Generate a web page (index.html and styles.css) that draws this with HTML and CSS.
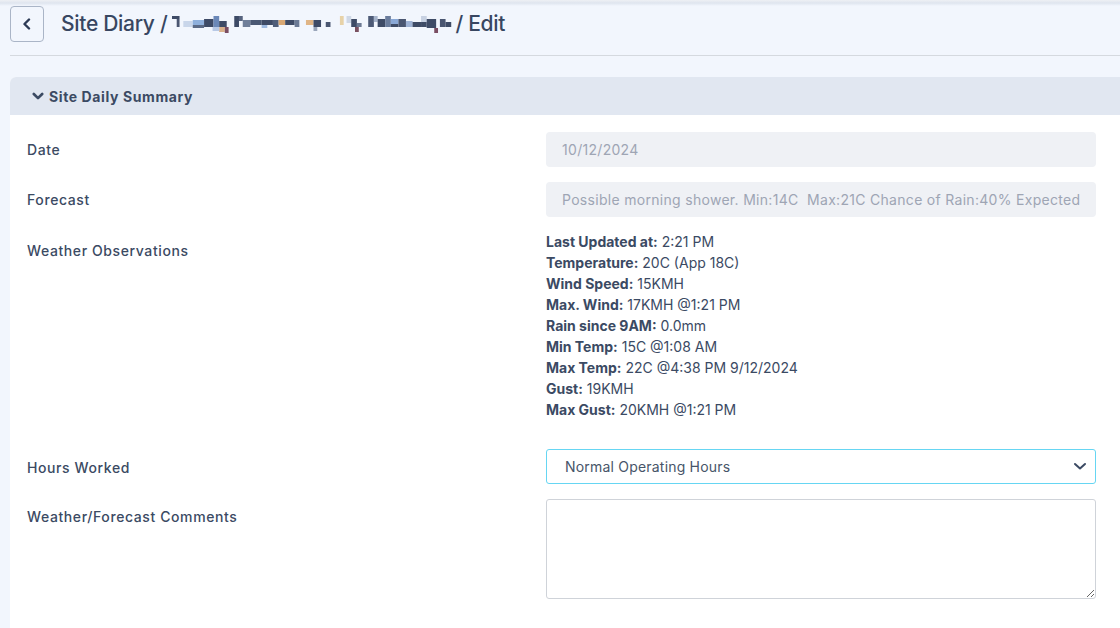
FILE: index.html
```html
<!DOCTYPE html>
<html>
<head>
<meta charset="utf-8">
<link rel="stylesheet" href="styles.css">
</head>
<body>
<div class="shade"></div>
<header class="topbar">
  <button class="back" type="button" aria-label="Back">
    <svg width="10" height="12" viewBox="0 0 10 12"><path d="M7 1.5 L2.5 6 L7 10.5" fill="none" stroke="#2c3a55" stroke-width="2.4" stroke-linecap="round" stroke-linejoin="round"/></svg>
  </button>
  <h1 class="title">
    <span>Site Diary /</span>
    <svg class="mosaic" width="283" height="22" viewBox="0 0 300 22" preserveAspectRatio="none">
      <rect x="0" y="3" width="8" height="3" fill="#3e4b66"/>
      <rect x="5" y="6" width="3" height="8" fill="#4a5671"/>
      <rect x="12" y="8" width="10" height="6" fill="#c9d6ea"/>
      <rect x="22" y="7" width="12" height="5" fill="#8fb0dc"/>
      <rect x="22" y="12" width="12" height="3" fill="#5b6a86"/>
      <rect x="34" y="6" width="10" height="8" fill="#3d4a66"/>
      <rect x="44" y="3" width="6" height="11" fill="#6b88b8"/>
      <rect x="50" y="8" width="8" height="6" fill="#3e4b66"/>
      <rect x="50" y="14" width="6" height="5" fill="#d9b08a"/>
      <rect x="56" y="14" width="4" height="6" fill="#7a4d62"/>
      <rect x="43" y="14" width="7" height="4" fill="#b8c9e6"/>
      <rect x="66" y="3" width="5" height="11" fill="#3d4a66"/>
      <rect x="71" y="3" width="4" height="5" fill="#56637e"/>
      <rect x="75" y="7" width="8" height="7" fill="#6f7e99"/>
      <rect x="83" y="7" width="12" height="5" fill="#4a5873"/>
      <rect x="95" y="7" width="12" height="5" fill="#3e4b66"/>
      <rect x="95" y="12" width="6" height="3" fill="#9fbbe2"/>
      <rect x="107" y="7" width="6" height="7" fill="#4f5e7a"/>
      <rect x="113" y="7" width="7" height="5" fill="#d9a874"/>
      <rect x="120" y="7" width="10" height="5" fill="#3e4b66"/>
      <rect x="130" y="7" width="5" height="7" fill="#6b7a95"/>
      <rect x="142" y="7" width="8" height="5" fill="#e0b586"/>
      <rect x="150" y="7" width="8" height="7" fill="#3e4b66"/>
      <rect x="150" y="14" width="4" height="4" fill="#9aa6bb"/>
      <rect x="163" y="9" width="5" height="5" fill="#4a5671"/>
      <rect x="178" y="3" width="4" height="9" fill="#e7d2a8"/>
      <rect x="185" y="3" width="5" height="7" fill="#cfd8e6"/>
      <rect x="190" y="6" width="6" height="8" fill="#3e4b66"/>
      <rect x="196" y="10" width="5" height="4" fill="#6d7a94"/>
      <rect x="194" y="14" width="4" height="5" fill="#7a5060"/>
      <rect x="208" y="3" width="6" height="11" fill="#4d5a76"/>
      <rect x="214" y="3" width="4" height="6" fill="#a7b4cb"/>
      <rect x="218" y="6" width="8" height="8" fill="#3e4b66"/>
      <rect x="226" y="3" width="6" height="11" fill="#6a7c9c"/>
      <rect x="232" y="6" width="8" height="5" fill="#8aa8d6"/>
      <rect x="232" y="11" width="8" height="3" fill="#3e4b66"/>
      <rect x="240" y="6" width="8" height="8" fill="#4a5671"/>
      <rect x="248" y="8" width="7" height="6" fill="#9fb3d5"/>
      <rect x="255" y="9" width="9" height="5" fill="#3e4b66"/>
      <rect x="264" y="3" width="6" height="6" fill="#c7d1e2"/>
      <rect x="264" y="9" width="6" height="5" fill="#3e4b66"/>
      <rect x="270" y="6" width="10" height="9" fill="#3e4b66"/>
      <rect x="278" y="15" width="4" height="5" fill="#7a4d62"/>
      <rect x="284" y="6" width="6" height="8" fill="#4a5671"/>
      <rect x="290" y="9" width="6" height="5" fill="#3e4b66"/>
    </svg>
    <span>/ Edit</span>
  </h1>
</header>

<section class="card">
  <div class="card-head">
    <svg width="12" height="9" viewBox="0 0 12 9"><path d="M1.8 2 L6 6.2 L10.2 2" fill="none" stroke="#3b4a63" stroke-width="2.6" stroke-linecap="round" stroke-linejoin="round"/></svg>
    <span>Site Daily Summary</span>
  </div>
  <div class="card-body">
    <div class="row">
      <label class="label">Date</label>
      <div class="field ro">10/12/2024</div>
    </div>
    <div class="row">
      <label class="label">Forecast</label>
      <div class="field ro">Possible morning shower. Min:14C&nbsp; Max:21C Chance of Rain:40% Expected</div>
    </div>
    <div class="row obs-row">
      <label class="label">Weather Observations</label>
      <ul class="obs">
        <li><b>Last Updated at:</b> 2:21 PM</li>
        <li><b>Temperature:</b> 20C (App 18C)</li>
        <li><b>Wind Speed:</b> 15KMH</li>
        <li><b>Max. Wind:</b> 17KMH @1:21 PM</li>
        <li><b>Rain since 9AM:</b> 0.0mm</li>
        <li><b>Min Temp:</b> 15C @1:08 AM</li>
        <li><b>Max Temp:</b> 22C @4:38 PM 9/12/2024</li>
        <li><b>Gust:</b> 19KMH</li>
        <li><b>Max Gust:</b> 20KMH @1:21 PM</li>
      </ul>
    </div>
    <div class="row hours-row">
      <label class="label">Hours Worked</label>
      <div class="field select">
        <span>Normal Operating Hours</span>
        <svg width="14" height="9" viewBox="0 0 14 9"><path d="M2 2 L7 6.5 L12 2" fill="none" stroke="#3b4a63" stroke-width="2" stroke-linecap="round" stroke-linejoin="round"/></svg>
      </div>
    </div>
    <div class="row comments-row">
      <label class="label">Weather/Forecast Comments</label>
      <textarea class="field area"></textarea>
    </div>
  </div>
</section>
</body>
</html>
```

FILE: styles.css
```css
* { box-sizing: border-box; }
html, body { margin: 0; padding: 0; }
body {
  background: #f2f6fd;
  font-family: Inter, "Open Sans", "Liberation Sans", sans-serif;
  color: #3b4a63;
  width: 1120px;
  height: 628px;
  overflow: hidden;
}
.shade {
  height: 6px;
  background: linear-gradient(#eef0f4 0, #dfe5ef 50%, #f2f6fd 100%);
}
.topbar {
  display: flex;
  align-items: center;
  height: 50px;
  margin-left: 10px;
  border-bottom: 1px solid #d5d9df;
  padding-bottom: 14px;
}
.back {
  width: 34px;
  height: 36px;
  border: 1px solid #aab5c7;
  border-radius: 4px;
  background: #f2f6fd;
  display: flex;
  align-items: center;
  justify-content: center;
  padding: 0;
  margin-top: 1px;
}
.title {
  margin: 0 0 0 17px;
  font-size: 21px;
  font-weight: 500;
  color: #384661;
  display: flex;
  align-items: center;
  letter-spacing: -0.3px;
}
.mosaic { margin: 0 0 0 5px; display: block; }
.card {
  margin: 21px 0 0 10px;
  background: #fff;
  border-radius: 6px 0 0 0;
  overflow: hidden;
}
.card-head {
  height: 38px;
  background: #e1e7f1;
  display: flex;
  align-items: center;
  padding-left: 22px;
  gap: 5px;
  font-size: 14px;
  font-weight: 700;
  color: #3b4a63;
  letter-spacing: 0.6px;
}
.card-body {
  padding: 17px 24px 40px 17px;
  display: flex;
  flex-direction: column;
  gap: 15px;
}
.row {
  display: grid;
  grid-template-columns: 519px 550px;
  align-items: start;
}
.label {
  font-size: 14px;
  font-weight: 500;
  color: #3b4a63;
  padding-top: 9px;
  line-height: 17px;
  letter-spacing: 0.6px;
}
.field {
  height: 35px;
  border-radius: 4px;
  font-family: inherit;
  font-size: 14px;
  display: flex;
  align-items: center;
}
.ro {
  background: #eff1f5;
  color: #9ea5b4;
  padding-left: 16px;
  white-space: nowrap;
  overflow: hidden;
  letter-spacing: 0.3px;
}
.obs-row { margin-bottom: 14px; }
.obs-row .label { padding-top: 10px; }
.hours-row .label { padding-top: 10px; }
.comments-row .label { padding-top: 9px; }
.obs {
  list-style: none;
  margin: -1px 0 0;
  padding: 0;
  font-size: 14px;
  line-height: 21px;
  color: #3b4a63;
}
.obs b { font-weight: 700; }
.select {
  border: 1px solid #66d6f3;
  border-radius: 3px;
  padding: 0 8px 0 18px;
  justify-content: space-between;
  color: #475569;
  height: 35px;
  letter-spacing: 0.2px;
}
.area {
  height: 100px;
  border: 1px solid #cfd3d9;
  border-radius: 3px;
  resize: vertical;
  background: #fff;
  width: 550px;
}
```
